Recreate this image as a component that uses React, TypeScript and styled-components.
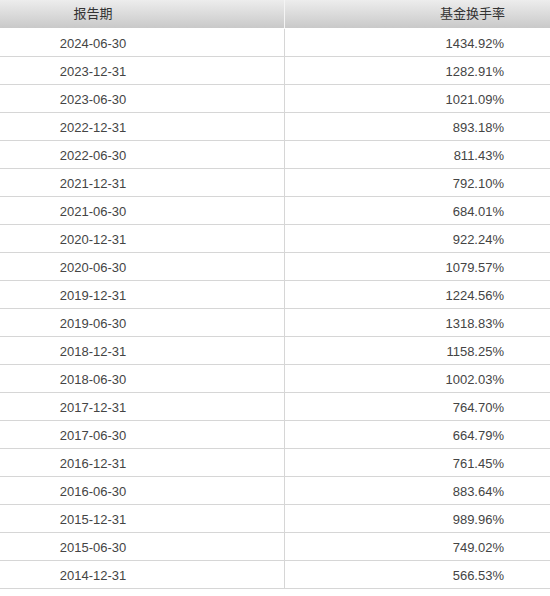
import React from "react";
import styled, { createGlobalStyle } from "styled-components";

const Global = createGlobalStyle`
  html, body { margin: 0; padding: 0; background: #fff; }
  body { font-family: "Liberation Sans", Arial, "Noto Sans CJK SC", sans-serif; }
`;

const Table = styled.div`
  width: 550px;
  display: grid;
  grid-template-columns: 285px 1fr;
  font-size: 13px;
`;

const HeadCell = styled.div<{ $right?: boolean }>`
  box-sizing: border-box;
  height: 29px;
  line-height: 28px;
  background: linear-gradient(#ededed, #c9c9c9);
  border-bottom: 1px solid #fff;
  border-right: ${(p) => (p.$right ? "none" : "1px solid #f4f4f4")};
  color: #333;
  text-align: ${(p) => (p.$right ? "right" : "center")};
  padding-right: ${(p) => (p.$right ? "45px" : "98px")};
  font-family: "Liberation Sans", "Noto Sans CJK SC", sans-serif;
`;

const Cell = styled.div<{ $right?: boolean }>`
  box-sizing: border-box;
  height: 28px;
  padding-top: 1px;
  line-height: 27px;
  border-bottom: 1px solid #d6d6d6;
  border-right: ${(p) => (p.$right ? "none" : "1px solid #d6d6d6")};
  color: #444;
  text-align: ${(p) => (p.$right ? "right" : "center")};
  padding-right: ${(p) => (p.$right ? "46px" : "98px")};
`;

const rows: [string, string][] = [
  ["2024-06-30", "1434.92%"],
  ["2023-12-31", "1282.91%"],
  ["2023-06-30", "1021.09%"],
  ["2022-12-31", "893.18%"],
  ["2022-06-30", "811.43%"],
  ["2021-12-31", "792.10%"],
  ["2021-06-30", "684.01%"],
  ["2020-12-31", "922.24%"],
  ["2020-06-30", "1079.57%"],
  ["2019-12-31", "1224.56%"],
  ["2019-06-30", "1318.83%"],
  ["2018-12-31", "1158.25%"],
  ["2018-06-30", "1002.03%"],
  ["2017-12-31", "764.70%"],
  ["2017-06-30", "664.79%"],
  ["2016-12-31", "761.45%"],
  ["2016-06-30", "883.64%"],
  ["2015-12-31", "989.96%"],
  ["2015-06-30", "749.02%"],
  ["2014-12-31", "566.53%"],
];

export default function App() {
  return (
    <>
      <Global />
      <Table>
        <HeadCell>报告期</HeadCell>
        <HeadCell $right>基金换手率</HeadCell>
        {rows.map(([d, v]) => (
          <React.Fragment key={d}>
            <Cell>{d}</Cell>
            <Cell $right>{v}</Cell>
          </React.Fragment>
        ))}
      </Table>
    </>
  );
}
